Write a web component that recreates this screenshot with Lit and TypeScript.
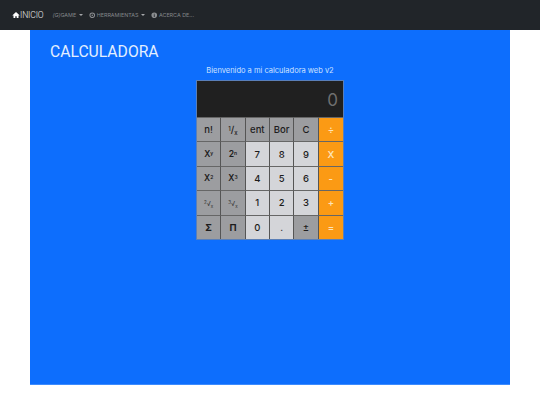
import { LitElement, html, css, svg } from "lit";
import { customElement } from "lit/decorators.js";

type K = { t: unknown; c: string };
const sup = (a: string, b: string) => html`${a}<sup>${b}</sup>`;
const root = (n: string) => html`<span class="rt"><sup>${n}</sup>√<sub>x</sub></span>`;
const keys: K[] = [
  { t: "n!", c: "g" }, { t: html`<span class="fr"><sup>1</sup>/<sub>x</sub></span>`, c: "g" }, { t: "ent", c: "g" }, { t: "Bor", c: "g" }, { t: "C", c: "g" }, { t: "÷", c: "o" },
  { t: sup("X", "y"), c: "g b" }, { t: sup("2", "n"), c: "g b" }, { t: "7", c: "l" }, { t: "8", c: "l" }, { t: "9", c: "l" }, { t: "X", c: "o" },
  { t: sup("X", "2"), c: "g b" }, { t: sup("X", "3"), c: "g b" }, { t: "4", c: "l" }, { t: "5", c: "l" }, { t: "6", c: "l" }, { t: "-", c: "o" },
  { t: root("2"), c: "g" }, { t: root("3"), c: "g" }, { t: "1", c: "l" }, { t: "2", c: "l" }, { t: "3", c: "l" }, { t: "+", c: "o" },
  { t: "Σ", c: "g s" }, { t: "Π", c: "g s" }, { t: "0", c: "l" }, { t: ".", c: "l" }, { t: "±", c: "g" }, { t: "=", c: "o" },
];

@customElement("app-root")
export class AppRoot extends LitElement {
  static styles = css`
    :host { display: block; width: 540px; height: 405px; background: #fff; font-family: Inter, "Liberation Sans", sans-serif; overflow: hidden; }
    nav { height: 30px; background: #212529; display: flex; align-items: center; padding-left: 12px; box-sizing: border-box; font-family: Inter, sans-serif; }
    .brand { display: flex; align-items: center; color: #e6e7e8; font-size: 8.6px; font-weight: 300; letter-spacing: -0.15px; margin-right: 9px; font-family: Roboto, sans-serif; }
    .link { display: flex; align-items: center; color: #83868a; font-size: 5.4px; margin-right: 6px; gap: 1px; }
    .link .caret { width: 0; height: 0; border: 2px solid transparent; border-top-color: #a5a7aa; border-bottom: 0; margin-left: 2px; }
    .brand svg { width: 8px; height: 8px; fill: #fff; }
    .link svg { width: 6.5px; height: 6.5px; fill: #8b8e91; }
    .game { font-style: italic; }
    main { margin: 0 30px; height: 355px; background: #0d6efd; border-bottom: 1px solid #3d8bfd; box-sizing: border-box; display: flex; flex-direction: column; }
    h1 { margin: 0; padding: 11px 0 0 20px; height: 21px; font: 400 15.7px/22px Roboto, sans-serif; color: #e3efff; }
    p { margin: 0; height: 18px; font-size: 7.5px; line-height: 17px; color: #cfe2ff; text-align: center; }
    .calc { width: 148px; align-self: center; background: #333; border: 1px solid #5a7fb8; box-sizing: border-box; }
    .screen { height: 36px; background: #202020; color: #6f6f6f; font-size: 17px; display: flex; align-items: center; justify-content: flex-end; padding-right: 5px; }
    .screen span { padding-top: 2px; }
    .keys { display: grid; grid-template-columns: repeat(6, 1fr); grid-auto-rows: 24.4px; }
    .k { display: flex; align-items: center; justify-content: center; font-size: 9.5px; color: #1c1c1c; border-right: 1px solid #555; border-top: 1px solid #666; box-sizing: border-box; font-weight: 500; }
    .k:nth-child(6n) { border-right: 0; }
    .g { background: #9c9da0; }
    .l { background: #d4d5d9; }
    .o { background: #fb9a14; color: #fde3b8; font-weight: 600; }
    .b { font-size: 8.5px; font-weight: 600; }
    .s { font-weight: 700; }
    sup, sub { font-size: 5px; line-height: 0; }
    sup { vertical-align: 2.5px; }
    sub { vertical-align: -1.5px; }
    .fr { font-size: 9.5px; }
    .fr sup, .fr sub { font-size: 6px; }
    .rt { font-size: 6.5px; font-weight: 400; color: #333; }
    .rt sup, .rt sub { font-size: 4.5px; }
  `;
  render() {
    return html`
      <nav>
        <div class="brand">
          <svg viewBox="0 0 16 16"><path d="M8 2 1 8.5l1 1L3 8.6V14h3.6v-3.6h2.8V14H13V8.6l1 .9 1-1z"/></svg>
          <span>INICIO</span>
        </div>
        <div class="link"><span><span class="game">(G)</span>GAME</span><i class="caret"></i></div>
        <div class="link">
          <svg viewBox="0 0 16 16">${svg`<path fill-rule="evenodd" d="M8 1a7 7 0 1 0 0 14A7 7 0 0 0 8 1zm0 2.5a4.5 4.5 0 1 1 0 9 4.5 4.5 0 0 1 0-9zM8 6a2 2 0 1 0 0 4 2 2 0 0 0 0-4z"/>`}</svg>
          <span>HERRAMIENTAS</span><i class="caret"></i>
        </div>
        <div class="link">
          <svg viewBox="0 0 16 16">${svg`<path fill-rule="evenodd" d="M8 1a7 7 0 1 0 0 14A7 7 0 0 0 8 1zM7 4h2v2H7zm0 3h2v5H7z"/>`}</svg>
          <span>ACERCA DE...</span>
        </div>
      </nav>
      <main>
        <h1>CALCULADORA</h1>
        <p>Bienvenido a mi calculadora web v2</p>
        <div class="calc">
          <div class="screen"><span>0</span></div>
          <div class="keys">${keys.map((k) => html`<div class="k ${k.c}"><span>${k.t}</span></div>`)}</div>
        </div>
      </main>
    `;
  }
}
